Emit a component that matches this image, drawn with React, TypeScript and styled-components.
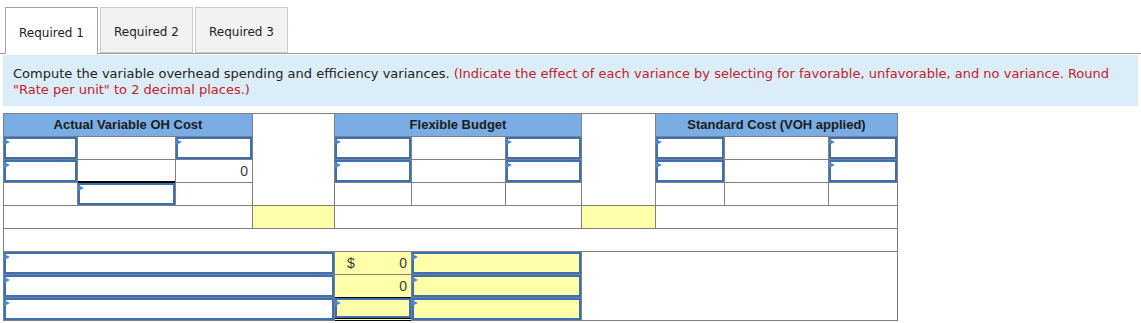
import React from "react";
import styled, { createGlobalStyle } from "styled-components";

const GlobalStyle = createGlobalStyle`
  html, body { margin: 0; padding: 0; background: #fff; }
  body { font-family: "DejaVu Sans", Verdana, sans-serif; color: #222; }
`;

const Page = styled.div`
  padding-top: 7px;
`;

const TabBar = styled.div`
  display: flex;
  gap: 2px;
  height: 46px;
  padding-left: 5px;
  border-bottom: 1px solid #9c9c9c;
`;

const Tab = styled.button<{ $active?: boolean }>`
  box-sizing: border-box;
  width: 93px;
  height: ${(p) => (p.$active ? "47px" : "46px")};
  margin: 0;
  padding: 3px 0 0;
  font: 12px "DejaVu Sans", Verdana, sans-serif;
  color: #222;
  cursor: pointer;
  background: ${(p) => (p.$active ? "#fff" : "#f2f2f2")};
  border: 1px solid ${(p) => (p.$active ? "#a3a3a3" : "#cbcbcb")};
  border-bottom: ${(p) => (p.$active ? "none" : "1px solid #cbcbcb")};
`;

const Prompt = styled.div`
  box-sizing: border-box;
  height: 51px;
  margin: 1px 3px 0;
  padding: 11px 10px 0;
  background: #dbedf9;
  font-size: 13px;
  line-height: 16px;
  color: #222;
`;

const Note = styled.span`
  color: #c4202a;
`;

const Sheet = styled.div`
  display: grid;
  grid-template-columns: 73px 97px 76px 81px 76px 93px 75px 73px 68px 103px 68px;
  grid-template-rows: repeat(9, 22px);
  gap: 1px;
  width: max-content;
  margin: 7px 0 0 3px;
  padding: 1px;
  background: #808080;
  font-family: "Liberation Sans", Arial, sans-serif;
`;

type Area = { $area: string };

const Heading = styled.div<Area>`
  grid-area: ${(p) => p.$area};
  display: flex;
  align-items: center;
  justify-content: center;
  padding-bottom: 1px;
  background: #79ade3;
  font-size: 13px;
  font-weight: bold;
  color: #1c1c1c;
`;

const Blank = styled.div<Area & { $shade?: boolean }>`
  grid-area: ${(p) => p.$area};
  background: ${(p) => (p.$shade ? "#ffffaa" : "#fff")};
`;

const Amount = styled.div<Area & { $shade?: boolean }>`
  grid-area: ${(p) => p.$area};
  display: flex;
  align-items: center;
  justify-content: space-between;
  padding: 0 4px 0 12px;
  background: ${(p) => (p.$shade ? "#ffffaa" : "#fff")};
  font-size: 14px;
  color: #3a3a3a;
`;

const Slot = styled.div<Area & { $shade?: boolean; $overline?: boolean; $total?: boolean }>`
  grid-area: ${(p) => p.$area};
  position: relative;
  display: flex;
  background: ${(p) => (p.$shade ? "#ffffaa" : "#fff")};
  box-shadow: ${(p) => (p.$overline ? `0 -${p.$total ? 1 : 2}px 0 #000` : "none")};
  ${(p) => (p.$total ? "margin-bottom: -1px; border-bottom: 3px double #000;" : "")}
`;

const Field = styled.input`
  box-sizing: border-box;
  flex: 1;
  width: 100%;
  min-width: 0;
  height: 100%;
  margin: 0;
  padding: 0 4px;
  border: 2px solid #3d6fb4;
  background: transparent;
  font: 13px "Liberation Sans", Arial, sans-serif;
  outline: none;
`;

/* small dropdown flag in the corner of each entry field */
const Flag = styled.span`
  position: absolute;
  top: 2px;
  left: 0;
  width: 0;
  height: 0;
  border-left: 6px solid #4a87cc;
  border-top: 3px solid transparent;
  border-bottom: 3px solid transparent;
  pointer-events: none;
`;

type EntryProps = { area: string; shade?: boolean; overline?: boolean; total?: boolean };

function Entry({ area, shade, overline, total }: EntryProps) {
  return (
    <Slot $area={area} $shade={shade} $overline={overline} $total={total}>
      <Field type="text" aria-label="entry" />
      <Flag />
    </Slot>
  );
}

export default function App() {
  return (
    <Page>
      <GlobalStyle />
      <TabBar>
        <Tab $active>Required 1</Tab>
        <Tab>Required 2</Tab>
        <Tab>Required 3</Tab>
      </TabBar>

      <Prompt>
        Compute the variable overhead spending and efficiency variances.{" "}
        <Note>
          (Indicate the effect of each variance by selecting for favorable, unfavorable, and no variance. Round
          <br />
          "Rate per unit" to 2 decimal places.)
        </Note>
      </Prompt>

      <Sheet>
        <Heading $area="1 / 1 / 2 / 4">Actual Variable OH Cost</Heading>
        <Blank $area="1 / 4 / 5 / 5" />
        <Heading $area="1 / 5 / 2 / 8">Flexible Budget</Heading>
        <Blank $area="1 / 8 / 5 / 9" />
        <Heading $area="1 / 9 / 2 / 12">Standard Cost (VOH applied)</Heading>

        <Entry area="2 / 1" />
        <Blank $area="2 / 2" />
        <Entry area="2 / 3" />
        <Entry area="2 / 5" />
        <Blank $area="2 / 6" />
        <Entry area="2 / 7" />
        <Entry area="2 / 9" />
        <Blank $area="2 / 10" />
        <Entry area="2 / 11" />

        <Entry area="3 / 1" />
        <Blank $area="3 / 2" />
        <Amount $area="3 / 3">
          <span />
          <span>0</span>
        </Amount>
        <Entry area="3 / 5" />
        <Blank $area="3 / 6" />
        <Entry area="3 / 7" />
        <Entry area="3 / 9" />
        <Blank $area="3 / 10" />
        <Entry area="3 / 11" />

        <Blank $area="4 / 1" />
        <Entry area="4 / 2" overline />
        <Blank $area="4 / 3" />
        <Blank $area="4 / 5" />
        <Blank $area="4 / 6" />
        <Blank $area="4 / 7" />
        <Blank $area="4 / 9" />
        <Blank $area="4 / 10" />
        <Blank $area="4 / 11" />

        <Blank $area="5 / 1 / 6 / 4" />
        <Blank $area="5 / 4" $shade />
        <Blank $area="5 / 5 / 6 / 8" />
        <Blank $area="5 / 8" $shade />
        <Blank $area="5 / 9 / 6 / 12" />

        <Blank $area="6 / 1 / 7 / 12" />

        <Entry area="7 / 1 / 8 / 5" />
        <Amount $area="7 / 5" $shade>
          <span>$</span>
          <span>0</span>
        </Amount>
        <Entry area="7 / 6 / 8 / 8" shade />
        <Blank $area="7 / 8 / 10 / 12" />

        <Entry area="8 / 1 / 9 / 5" />
        <Amount $area="8 / 5" $shade>
          <span />
          <span>0</span>
        </Amount>
        <Entry area="8 / 6 / 9 / 8" shade />

        <Entry area="9 / 1 / 10 / 5" />
        <Entry area="9 / 5" shade overline total />
        <Entry area="9 / 6 / 10 / 8" shade />
      </Sheet>
    </Page>
  );
}
